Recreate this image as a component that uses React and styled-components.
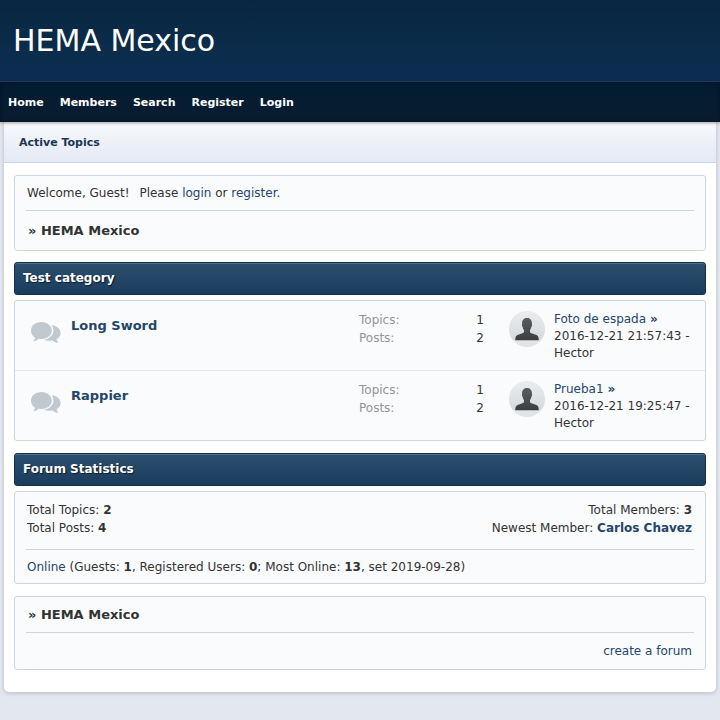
import React from 'react';
import styled, { createGlobalStyle, ThemeProvider } from 'styled-components';


const theme = {
    main: '#1c3f5f',
    link: '#23466a',
    text: '#333333',
    muted: '#929496',
    line: '#c9d7e3',
    panel: '#fafbfd',
    page: '#e2e7f0',
}

const navItems = ['Home', 'Members', 'Search', 'Register', 'Login'];

const forums = [
    {id: 1, name: 'Long Sword', topics: 1, posts: 2, latest: 'Foto de espada', date: '2016-12-21 21:57:43', author: 'Hector'},
    {id: 2, name: 'Rappier', topics: 1, posts: 2, latest: 'Prueba1', date: '2016-12-21 19:25:47', author: 'Hector'},
];


const ForumIcon = () => (
    <BubbleSvg viewBox="0 0 30 22" aria-hidden="true">
        <path d="M10.4 0C16.300 0 20.800 3.800 20.800 8.500S16.300 17 10.400 17c-1 0-1.900-.1-2.800-.3C6.300 18.100 4.500 19.100 1.900 19.300c1.100-1 1.900-2.100 2.200-3.500C1.600 14.200 0 11.500 0 8.500 0 3.800 4.500 0 10.400 0z" />
        <path d="M20.600 3.200C25.700 3.500 29.600 6.700 29.600 11c0 2.600-1.500 4.900-4 6.300.2 1.300.8 2.300 1.900 3.500-2.400 0-4.400-.9-5.800-2.400-3.300.7-6.500.4-9-.7A11.400 9.400 0 0 0 20.600 3.200z" />
    </BubbleSvg>
)

const AvatarIcon = () => (
    <AvatarSvg viewBox="0 0 36 36" aria-hidden="true">
        <defs>
            <linearGradient id="avatarBack" x1="0" y1="0" x2="0" y2="1">
                <stop offset="0" stopColor="#eaedef" />
                <stop offset="0.8" stopColor="#d6dadb" />
                <stop offset="0.82" stopColor="#e2e5e7" />
                <stop offset="1" stopColor="#e2e5e7" />
            </linearGradient>
            <linearGradient id="avatarBody" x1="0" y1="0" x2="0" y2="1">
                <stop offset="0" stopColor="#5a5c5e" />
                <stop offset="1" stopColor="#3c3f42" />
            </linearGradient>
        </defs>
        <circle cx="18" cy="18" r="18" fill="url(#avatarBack)" />
        <path fill="url(#avatarBody)" d="M18 7c3 0 4.900 2 4.900 5.200 0 1 .3 1.200.1 2.400-.1.800-.6 1-.8 1.900-.2 1.100-.8 1.900-1.200 2.500v2.200c.8 1.300 4.600 1.700 6.900 3 1.500.9 1.800 2.600 1.900 5H6.200c.1-2.400.4-4.100 1.900-5 2.300-1.300 6-1.700 6.900-3V19c-.5-.6-1-1.400-1.200-2.500-.2-.9-.7-1.100-.8-1.900-.2-1.200.1-1.400.1-2.400C13.100 9 15 7 18 7z" />
    </AvatarSvg>
)


const App = () => {

    return (
        <ThemeProvider theme={theme}>
            <GlobalStyle />
            <Header>
                <SiteTitle>HEMA Mexico</SiteTitle>
            </Header>
            <MainNav>
                {navItems.map(item => <NavLink key={item} href="#">{item}</NavLink>)}
            </MainNav>
            <Wrapper>
                <SubNav>
                    <SubNavLink href="#">Active Topics</SubNavLink>
                </SubNav>
                <Content>
                    <Panel>
                        <Welcome>
                            <Greeting>Welcome, Guest!</Greeting> Please <Link href="#">login</Link> or <Link href="#">register</Link>.
                        </Welcome>
                        <Divider />
                        <Crumb $height={39}>» HEMA Mexico</Crumb>
                    </Panel>

                    <Category>
                        <SectionTitle>Test category</SectionTitle>
                        <Panel $flush>
                            <ForumList>
                                {forums.map(forum => (
                                    <ForumRow key={forum.id}>
                                        <ForumIcon />
                                        <ForumName><Link href="#">{forum.name}</Link></ForumName>
                                        <Counts>
                                            <dt>Topics:</dt>
                                            <dd>{forum.topics}</dd>
                                            <dt>Posts:</dt>
                                            <dd>{forum.posts}</dd>
                                        </Counts>
                                        <Latest>
                                            <AvatarIcon />
                                            <p>
                                                <Link href="#">{forum.latest} <b>»</b></Link><br />
                                                {forum.date} - {forum.author}
                                            </p>
                                        </Latest>
                                    </ForumRow>
                                ))}
                            </ForumList>
                        </Panel>
                    </Category>

                    <Category $spaced>
                        <SectionTitle>Forum Statistics</SectionTitle>
                        <Panel>
                            <Stats>
                                <div>
                                    Total Topics: <b>2</b><br />
                                    Total Posts: <b>4</b>
                                </div>
                                <StatsRight>
                                    Total Members: <b>3</b><br />
                                    Newest Member: <Link href="#"><b>Carlos Chavez</b></Link>
                                </StatsRight>
                            </Stats>
                            <Divider />
                            <Online>
                                <Link href="#">Online</Link> (Guests: <b>1</b>, Registered Users: <b>0</b>; Most Online: <b>13</b>, set 2019-09-28)
                            </Online>
                        </Panel>
                    </Category>

                    <Panel>
                        <Crumb $height={35}>» HEMA Mexico</Crumb>
                        <Divider />
                        <FooterRow>
                            <Link href="#">create a forum</Link>
                        </FooterRow>
                    </Panel>
                </Content>
            </Wrapper>
        </ThemeProvider>
    )
}


export default App;


const GlobalStyle = createGlobalStyle`
    * {
        box-sizing: border-box;
        margin: 0;
        padding: 0;
    }

    body {
        background-color: ${({theme}) => theme.page};
        color: ${({theme}) => theme.text};
        font-family: 'DejaVu Sans', sans-serif;
        font-size: 12px;
        line-height: 18px;
    }
`

const Header = styled.header`
    display: flex;
    align-items: center;
    padding: 20px 13px;
    background: linear-gradient(#082641, #0b2d4b 65%, #0c2d51);
    border-bottom: 1px solid #233d5b;
`

const SiteTitle = styled.h1`
    font-size: 30px;
    font-weight: normal;
    line-height: 41px;
    color: white;
`

const MainNav = styled.nav`
    display: flex;
    align-items: center;
    padding: 12px 0 10px;
    background: linear-gradient(#031c33, #081c2f);
    box-shadow: 0 1px 3px rgba(0, 0, 0, .35), inset 0 0 4px rgba(0, 0, 0, .3);
    position: relative;
`

const NavLink = styled.a`
    padding: 0 8px;
    font-size: 11px;
    font-weight: bold;
    color: white;
    text-decoration: none;
`

const Wrapper = styled.main`
    margin: 0 4px 28px;
    background-color: white;
    border-radius: 0 0 5px 5px;
    box-shadow: 0 1px 4px rgba(0, 0, 0, .2);
`

const SubNav = styled.nav`
    display: flex;
    align-items: center;
    padding: 12px 15px 10px;
    background: linear-gradient(#f6f8fa, #e5e9f5);
    border-bottom: 1px solid ${({theme}) => theme.line};
`

const SubNavLink = styled.a`
    font-size: 11px;
    font-weight: bold;
    color: #1c3652;
    text-decoration: none;
`

const Content = styled.div`
    display: flex;
    flex-direction: column;
    padding: 12px 10px 22px;
`

const Category = styled.section`
    margin: ${({$spaced}) => $spaced ? '12px 0' : '11px 0 0'};
`

const Panel = styled.div`
    padding: ${({$flush}) => $flush ? '0' : '0 11px'};
    background-color: ${({theme}) => theme.panel};
    border: 1px solid ${({theme}) => theme.line};
    border-radius: 3px;
`

const Divider = styled.hr`
    border: none;
    border-top: 1px solid ${({theme}) => theme.line};
`

const Link = styled.a`
    color: ${({theme}) => theme.link};
    text-decoration: none;
`

const Welcome = styled.p`
    padding: 8px 1px;
`

const Greeting = styled.span`
    margin-right: 6px;
`

const Crumb = styled.h2`
    display: flex;
    align-items: center;
    height: ${({$height}) => $height}px;
    padding: 0 2px;
    font-size: 13px;
`

const SectionTitle = styled.h2`
    margin-bottom: 5px;
    padding: 7px 8px;
    font-size: 12px;
    line-height: 17px;
    color: white;
    text-shadow: 1px 1px 1px rgba(0, 0, 0, .6);
    background: linear-gradient(#2e506f, #193c5d);
    border: 1px solid #12304c;
    border-radius: 3px;
    box-shadow: inset 0 1px 0 #51708a;
`

const ForumList = styled.ul`
    list-style: none;
`

const ForumRow = styled.li`
    display: grid;
    grid-template-columns: 30px minmax(0, 1fr) 150px 184px;
    align-items: start;
    padding: 10px 12px 8px 16px;

    & + & {
        border-top: 1px solid #e2e8ee;
    }
`

const BubbleSvg = styled.svg`
    width: 30px;
    height: 22px;
    margin-top: 11px;
    fill: #c0c8d0;
`

const ForumName = styled.h3`
    padding: 6px 10px;
    font-size: 13px;
`

const Counts = styled.dl`
    display: grid;
    grid-template-columns: 1fr auto;
    padding-right: 25px;

    dt {
        color: ${({theme}) => theme.muted};
    }
`

const Latest = styled.div`
    display: flex;
    align-items: flex-start;
    gap: 9px;
    line-height: 17px;
`

const AvatarSvg = styled.svg`
    flex: none;
    width: 36px;
    height: 36px;
`

const Stats = styled.div`
    display: flex;
    justify-content: space-between;
    padding: 9px 2px 12px 1px;
`

const StatsRight = styled.div`
    text-align: right;
`

const Online = styled.p`
    padding: 8px 1px 7px;
`

const FooterRow = styled.div`
    padding: 9px 2px;
    text-align: right;
`
